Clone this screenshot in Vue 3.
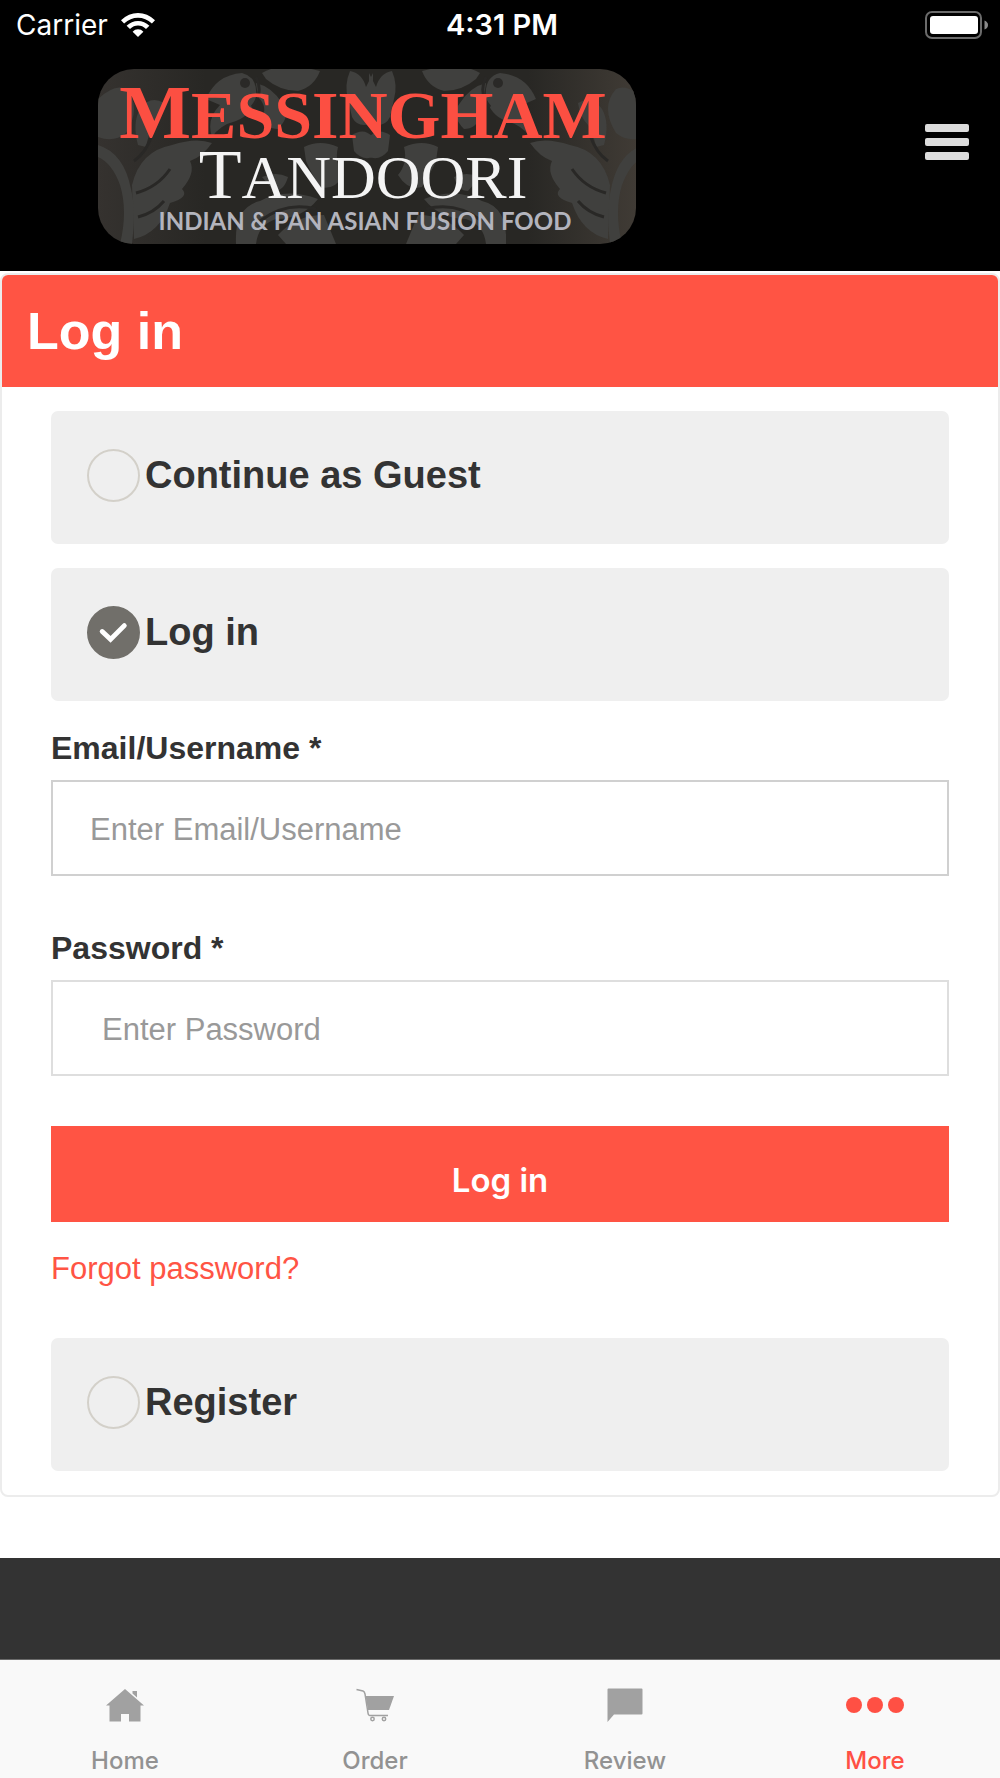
<script setup>
import { ref } from 'vue'

const mode = ref('login')
const username = ref('')
const password = ref('')

const before = [
  { value: 'guest', label: 'Continue as Guest' },
  { value: 'login', label: 'Log in' },
]
const after = [{ value: 'register', label: 'Register' }]
</script>

<template>
  <div class="page">
    <header class="top">
      <div class="status">
        <div class="carrier">
          <span>Carrier</span>
          <svg width="34" height="24" viewBox="0 0 34 24" aria-hidden="true">
            <path d="M0 7.2Q7.6 0 17 0T34 7.2L30.9 10.5Q24.6 4.8 17 4.8T3.1 10.5Z" />
            <path d="M5.6 12.8Q10.6 8 17 8t11.4 4.8L25 16Q21.400 12.600 17 12.600T9 16Z" />
            <path d="M11.600 18.700Q13.800 16.300 17 16.300t5.400 2.400L17 24Z" />
          </svg>
        </div>
        <span class="time">4:31 PM</span>
        <svg class="battery" width="63" height="28" viewBox="0 0 63 28" aria-hidden="true">
          <rect x="1" y="1" width="55" height="26" rx="6" fill="none" stroke="#6b6b6b" stroke-width="2" />
          <rect x="5" y="5" width="48" height="18" rx="3" fill="#fff" />
          <path d="M59.500 9.500Q63 11 63 14t-3.500 4.500Z" fill="#8a8a8a" />
        </svg>
      </div>
      <div class="brand">
        <svg class="logo" viewBox="0 0 538 175" role="img" aria-label="Messingham Tandoori">
          <defs>
            <clipPath id="badge"><rect width="538" height="175" rx="36" /></clipPath>
            <linearGradient id="badgeFill" x1="0" x2="1" y1="0" y2="0">
              <stop offset="0" stop-color="#35322f" />
              <stop offset="0.2" stop-color="#282724" />
              <stop offset="0.8" stop-color="#282724" />
              <stop offset="1" stop-color="#403b35" />
            </linearGradient>
            <g id="damask">
              <path d="M-2 32Q16 14 28 20Q44 38 28 64Q16 74 0 68Z" />
              <path d="M40 76Q34 54 42 40Q52 26 66 34Q64 48 56 56Q50 66 48 78Z" />
              <path d="M34 116Q42 82 74 76Q98 68 114 74Q104 88 92 92Q98 104 84 120Q92 128 72 134Q62 164 36 170Z" />
              <path d="M0 76Q26 84 33 120Q38 140 34 175H22Q30 142 22 116Q14 94 0 88Z" />
              <path d="M108 30Q118 6 144 4Q160 8 158 28Q154 46 138 52Q122 56 114 68Q108 50 122 36Z" />
              <path d="M164 4Q184 -8 222 2Q216 18 200 22Q182 22 168 10Z" />
              <path d="M158 14Q174 18 184 34Q194 46 180 60Q168 60 164 48Q170 38 160 28Z" />
              <path d="M206 78Q222 70 240 78Q236 94 246 106Q236 122 222 118Q212 102 208 92Z" />
              <path d="M138 175Q136 138 162 132Q188 118 220 130Q204 150 178 150Q160 156 158 175Z" />
              <path d="M164 108Q178 102 190 108Q186 122 176 122Z" />
              <path d="M180 166Q198 146 226 146L238 175H188Z" />
              <path d="M250 30Q246 16 252 2Q264 4 268 18L275 4V54Q260 60 254 48Z" />
              <path d="M254 66Q266 58 275 68V88Q264 92 256 82Z" />
            </g>
          </defs>
          <g clip-path="url(#badge)">
            <rect width="538" height="175" fill="url(#badgeFill)" />
            <g fill="#40403e">
              <use href="#damask" />
              <use href="#damask" transform="translate(546 0) scale(-1 1)" />
            </g>
            <g fill="none" stroke="#292826" stroke-width="3">
              <path d="M38 124Q60 118 72 100M40 148Q56 144 66 132M36 92Q48 84 54 66" />
              <path d="M508 124Q486 118 474 100M506 148Q490 144 480 132M510 92Q498 84 492 66" />
              <path d="M162 152Q188 132 218 140M384 152Q358 132 328 140M158 8Q166 24 154 38M388 8Q380 24 392 38" />
            </g>
            <circle cx="147" cy="14" r="5" fill="#2a2927" />
            <circle cx="400" cy="14" r="5" fill="#2a2927" />
          </g>
          <g text-anchor="middle">
            <text class="name" x="265" y="69"><tspan class="name-cap">M</tspan>ESSINGHAM</text>
            <text class="kind" x="265" y="129"><tspan class="kind-cap">T</tspan>ANDOORI</text>
            <text class="tagline" x="267" y="161">INDIAN &amp; PAN ASIAN FUSION FOOD</text>
          </g>
        </svg>
        <button class="menu" type="button" aria-label="Menu">
          <span></span><span></span><span></span>
        </button>
      </div>
    </header>

    <main>
      <section class="panel">
        <h1>Log in</h1>
        <form class="body" @submit.prevent>
          <div class="options">
            <label v-for="o in before" :key="o.value" class="option">
              <span class="mark">
                <input v-model="mode" type="radio" name="mode" :value="o.value" />
                <svg v-if="mode === o.value" viewBox="0 0 54 54" aria-hidden="true">
                  <path d="M15.500 26L24 34L38 20" />
                </svg>
              </span>
              <span>{{ o.label }}</span>
            </label>
          </div>

          <div v-if="mode === 'login'" class="login">
            <label class="caption" for="username">Email/Username *</label>
            <input id="username" v-model="username" class="field" type="text" placeholder="Enter Email/Username" />
            <label class="caption second" for="password">Password *</label>
            <input id="password" v-model="password" class="field secret" type="password" placeholder="Enter Password" />
            <button class="submit" type="submit">Log in</button>
            <a class="forgot" href="#forgot">Forgot password?</a>
          </div>

          <div class="options">
            <label v-for="o in after" :key="o.value" class="option">
              <span class="mark">
                <input v-model="mode" type="radio" name="mode" :value="o.value" />
                <svg v-if="mode === o.value" viewBox="0 0 54 54" aria-hidden="true">
                  <path d="M15.500 26L24 34L38 20" />
                </svg>
              </span>
              <span>{{ o.label }}</span>
            </label>
          </div>
        </form>
      </section>
    </main>

    <footer class="strip"></footer>

    <nav class="tabs">
      <a href="#home">
        <svg width="38" height="34" viewBox="0 0 38 34" aria-hidden="true">
          <path d="M19 1L38 17.500H34.500V33.500H23V26H15V33.500H3.500V17.500H0Z" />
          <path d="M26.500 3H31V9.500L26.500 5.500Z" />
        </svg>
        <span>Home</span>
      </a>
      <a href="#order">
        <svg width="38" height="34" viewBox="0 0 38 34" aria-hidden="true">
          <path d="M9.500 8H38L33 22H12Z" />
          <path class="line" d="M0.500 1.500L7 3Q8.500 3.500 9 6L12 25Q12.300 27.500 14 27.500H32" />
          <circle class="line" cx="16.500" cy="31" r="1.700" />
          <circle class="line" cx="28" cy="31" r="1.700" />
        </svg>
        <span>Order</span>
      </a>
      <a href="#review">
        <svg width="36" height="34" viewBox="0 0 36 34" aria-hidden="true">
          <path d="M1.500 0.500H34.500Q35.500 0.500 35.500 1.500V25.500Q35.500 26.500 34.500 26.500H7L0.500 34V1.500Q0.500 0.500 1.500 0.500Z" />
        </svg>
        <span>Review</span>
      </a>
      <a href="#more" class="active">
        <svg width="60" height="34" viewBox="0 0 60 34" aria-hidden="true">
          <circle cx="9" cy="17" r="8" />
          <circle cx="30" cy="17" r="8" />
          <circle cx="51" cy="17" r="8" />
        </svg>
        <span>More</span>
      </a>
    </nav>
  </div>
</template>

<style>
body {
  margin: 0;
  background: #fff;
}
</style>

<style scoped>
.page {
  display: flex;
  flex-direction: column;
  min-height: 100vh;
  color: #333;
  font-family: "Liberation Sans", Arial, sans-serif;
}

.page * {
  box-sizing: border-box;
}

.top {
  padding-bottom: 27px;
  background: #000;
  color: #fff;
}

.status {
  display: grid;
  grid-template-columns: 1fr auto 1fr;
  align-items: center;
  padding: 0 12px 0 16px;
  font: 400 28px/50px Inter, sans-serif;
}

.carrier {
  display: flex;
  align-items: center;
  gap: 13px;
}

.carrier svg {
  fill: #fff;
}

.time {
  font-size: 29px;
  font-weight: 600;
}

.battery {
  justify-self: end;
}

.brand {
  display: flex;
  justify-content: space-between;
  align-items: flex-start;
  padding: 19px 31px 0 98px;
}

.logo {
  display: block;
  flex: 0 1 538px;
  min-width: 0;
}

.name {
  fill: #fc4f42;
  font: 700 68px "Liberation Serif", serif;
}

.name-cap {
  font-size: 76px;
}

.kind {
  fill: #f4f4f4;
  font: 400 62px "Liberation Serif", serif;
}

.kind-cap {
  font-size: 70px;
}

.tagline {
  fill: #b3b4bd;
  font: 700 24px Lato, sans-serif;
}

.menu {
  display: flex;
  flex-direction: column;
  gap: 6px;
  width: 44px;
  margin: 55px 0 0;
  padding: 0;
  border: 0;
  background: none;
}

.menu span {
  height: 8px;
  border-radius: 2px;
  background: #dcdcdc;
}

main {
  padding: 2px 0 61px;
}

.panel {
  border: 2px solid #ececec;
  border-radius: 8px;
  overflow: hidden;
}

h1 {
  margin: 0;
  padding: 0 25px;
  background: #ff5444;
  color: #fff;
  font-size: 52px;
  line-height: 112px;
}

.body {
  padding: 24px 49px;
}

.options {
  display: grid;
  gap: 24px;
}

.option {
  display: flex;
  align-items: flex-start;
  gap: 5px;
  padding: 38px 36px 42px;
  border-radius: 7px;
  background: #efefef;
  font-size: 38px;
  font-weight: 700;
  line-height: 52px;
}

.mark {
  display: grid;
  width: 53px;
  height: 53px;
}

.mark > * {
  grid-area: 1 / 1;
  width: 100%;
  height: 100%;
}

.mark input {
  margin: 0;
  appearance: none;
  border: 2px solid #d3d0c9;
  border-radius: 50%;
}

.mark input:checked {
  border-color: #716f6a;
  background: #716f6a;
}

.mark svg {
  z-index: 1;
  pointer-events: none;
  fill: none;
  stroke: #fff;
  stroke-width: 5;
  stroke-linecap: round;
}

.login {
  display: flex;
  flex-direction: column;
  padding: 29px 0 51px;
  font-size: 31px;
  line-height: 36px;
}

.caption {
  margin-bottom: 14px;
  font-size: 32px;
  font-weight: 700;
}

.second {
  margin-top: 54px;
}

.field {
  width: 100%;
  height: 96px;
  padding: 3px 37px 0;
  border: 2px solid #d0d0d0;
  border-radius: 0;
  background: #fff;
  color: #333;
  font: inherit;
}

.secret {
  padding: 3px 49px 0;
  border-color: #dedede;
}

.field::placeholder {
  color: #999;
  opacity: 1;
}

.submit {
  height: 96px;
  margin: 50px 0 29px;
  padding: 12px 0 0;
  border: 0;
  background: #ff5444;
  color: #fff;
  font: 600 33px/36px Inter, sans-serif;
}

.forgot {
  align-self: flex-start;
  color: #ff5444;
  text-decoration: none;
}

.strip {
  flex: 1 0 101px;
  background: #333;
}

.tabs {
  display: grid;
  grid-template-columns: repeat(4, 1fr);
  border-top: 1px solid #6a6a6a;
  background: #f9f9f9;
}

.tabs a {
  display: flex;
  flex-direction: column;
  align-items: center;
  gap: 24px;
  padding: 28px 0 2px;
  color: #929292;
  font: 500 24px/30px Inter, sans-serif;
  text-decoration: none;
}

.tabs svg {
  fill: #a1a1a1;
}

.tabs .line {
  fill: none;
  stroke: #a1a1a1;
  stroke-width: 1.500;
}

.tabs .active {
  color: #ff5044;
}

.tabs .active svg {
  fill: #ff5044;
}
</style>
